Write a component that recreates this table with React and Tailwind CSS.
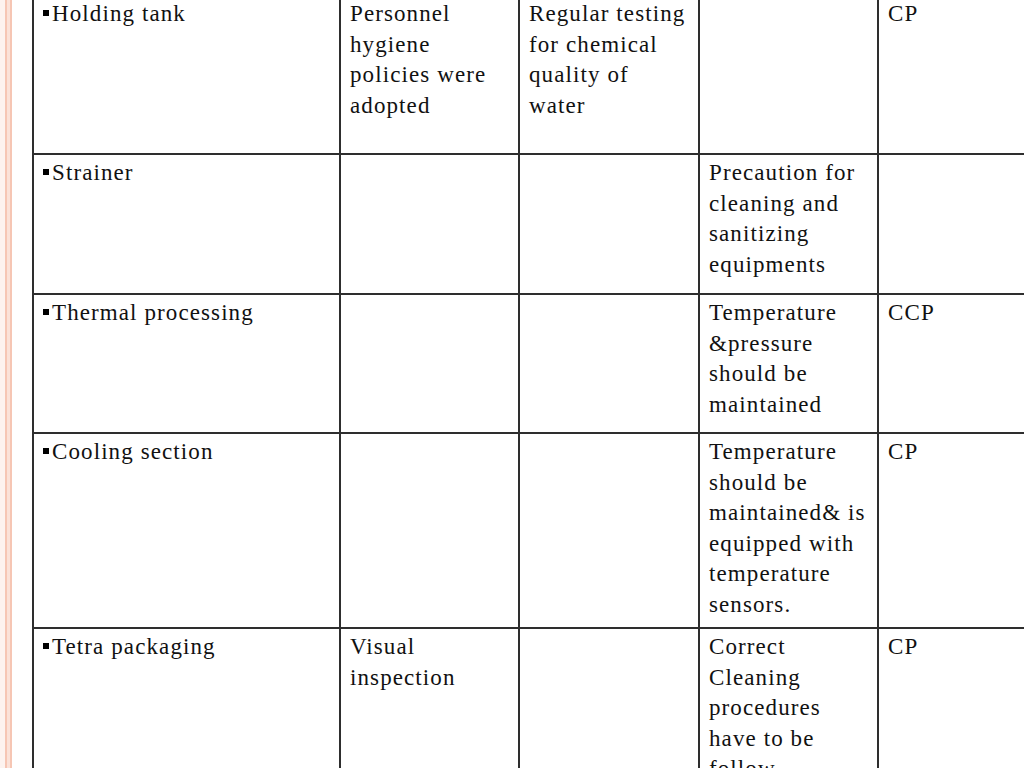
import React from "react";

const rows = [
  {
    h: "h-[157px]",
    c: [["Holding tank"], ["Personnel", "hygiene", "policies were", "adopted"], ["Regular testing", "for chemical", "quality of", "water"], [], ["CP"]],
  },
  {
    h: "h-[138px]",
    c: [["Strainer"], [], [], ["Precaution for", "cleaning and", "sanitizing", "equipments"], []],
  },
  {
    h: "h-[137px]",
    c: [["Thermal processing"], [], [], ["Temperature", "&pressure", "should be", "maintained"], ["CCP"]],
  },
  {
    h: "h-[193px]",
    c: [["Cooling section"], [], [], ["Temperature", "should be", "maintained& is", "equipped with", "temperature", "sensors."], ["CP"]],
  },
  {
    h: "h-[200px]",
    c: [["Tetra packaging"], ["Visual", "inspection"], [], ["Correct", "Cleaning", "procedures", "have to be", "follow"], ["CP"]],
  },
];

function Cell({ lines, first }) {
  return (
    <div className="bg-white pl-[9px] pt-[3px] pr-[4px] overflow-hidden">
      {lines.map((l, i) => (
        <div key={i} className="whitespace-nowrap">
          {first && i === 0 ? (
            <span className="inline-block w-[6px] h-[6px] bg-black mr-[3px] align-[5px]" />
          ) : null}
          {l}
        </div>
      ))}
    </div>
  );
}

export default function App() {
  return (
    <div className="w-[1024px] h-[768px] overflow-hidden bg-white flex">
      <div className="w-[5px] h-full bg-[#fdf3ef] shrink-0" />
      <div className="w-[7px] h-full bg-[#fbe2d8] border-x-2 border-[#f6c6b4] shrink-0" />
      <div className="ml-[20px] -mt-[6px] shrink-0">
        <div className="grid grid-cols-[305px_177px_178px_177px_178px] gap-[2px] p-[2px] bg-[#2e2e2e] font-['Liberation_Serif','Times_New_Roman',serif] text-[23px] leading-[30.6px] tracking-[1.1px] text-[#111]">
          {rows.map((r, ri) =>
            r.c.map((lines, ci) => (
              <div key={ri + "-" + ci} className={r.h + " flex flex-col"}>
                <div className="flex-1 bg-white">
                  <Cell lines={lines} first={ci === 0} />
                </div>
              </div>
            ))
          )}
        </div>
      </div>
    </div>
  );
}
